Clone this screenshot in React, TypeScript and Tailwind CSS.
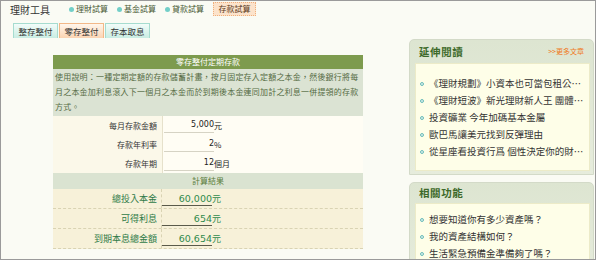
const cjk = "font-['Noto_Sans_CJK_TC','Noto_Sans',sans-serif]";
const num = "font-['DejaVu_Sans','Noto_Sans_CJK_TC',sans-serif]";

function NavItem({ label }: { label: string }) {
  return (
    <div className="flex items-center gap-[2px]">
      <span className="h-[5px] w-[5px] rounded-full bg-[#72cfc8]" />
      <span className="text-[8px] text-[#4a5c36]">{label}</span>
    </div>
  );
}

function Tab({ label, active }: { label: string; active?: boolean }) {
  return (
    <div
      className={
        active
          ? "flex h-[15px] w-[45px] items-center justify-center border border-b-0 border-[#f2b888] bg-gradient-to-b from-[#fff6ec] to-[#fbd4b2] text-[8.5px] text-[#333]"
          : "flex h-[15px] w-[45px] items-center justify-center border border-b-0 border-[#a6dccf] bg-gradient-to-b from-[#f2fcf9] to-[#c9ede3] text-[8.5px] text-[#333]"
      }
    >
      {label}
    </div>
  );
}

function InputRow({ label, value, unit }: { label: string; value: string; unit: string }) {
  return (
    <div className="flex h-[19px]">
      <div className="flex w-[109px] items-center justify-end bg-[#fbf8e9] pr-[5px] text-[8px] text-[#333]">
        {label}
      </div>
      <div className="flex flex-1 items-center border-l border-[#e6e1cb] bg-[#fffdf4] pl-[1px]">
        <span className={`${num} inline-block w-[50px] border-b border-[#d6d3c4] pb-[1px] text-right text-[8px] leading-[12px] text-[#222]`}>
          {value}
        </span>
        <span className="text-[8px] text-[#222]">{unit}</span>
      </div>
    </div>
  );
}

function ResultRow({ label, value }: { label: string; value: string }) {
  return (
    <div className="flex h-[20px] border-b border-dashed border-[#d9d3b3] bg-[#f7f1d9]">
      <div className="flex w-[109px] items-center justify-end border-r border-dashed border-[#d9d3b3] pr-[4px] text-[9px] text-[#2e7a47]">
        {label}
      </div>
      <div className="flex flex-1 items-center">
        <span className={`${num} inline-block w-[50px] border-b border-[#5a5a4a] text-right text-[9.5px] leading-[13px] text-[#2f8a4c]`}>
          {value}
        </span>
        <span className="text-[9px] text-[#2f8a4c]">元</span>
      </div>
    </div>
  );
}

function SideItem({ text }: { text: string }) {
  return (
    <li className="flex h-[17px] items-center gap-[5px] whitespace-nowrap text-[9.5px] text-[#333]">
      <span className="h-[4px] w-[4px] shrink-0 rounded-full border border-[#6cbcb8] bg-[#d8f0ee]" />
      {text}
    </li>
  );
}

function SideBox({
  title,
  more,
  items,
  headerH,
  padTop,
}: {
  title: string;
  more?: boolean;
  items: string[];
  headerH: string;
  padTop: string;
}) {
  return (
    <div className="rounded-t-[5px] border border-[#d3dac8] bg-gradient-to-b from-[#dde5d1] to-[#e6ecdc] pb-[3px] pl-[5px] pr-[3px]">
      <div className={`flex ${headerH} items-center justify-between pl-[4px] pr-[6px]`}>
        <span className="text-[10.5px] font-bold tracking-[0.6px] text-[#3d6a2a]">{title}</span>
        {more && <span className="text-[7px] text-[#f07a1c]">&gt;&gt;更多文章</span>}
      </div>
      <ul className={`border border-[#ecebc8] bg-[#fefee8] ${padTop} pb-[10px] pl-[4px]`}>
        {items.map((t) => (
          <SideItem key={t} text={t} />
        ))}
      </ul>
    </div>
  );
}

export default function App() {
  return (
    <div className={`${cjk} h-[265px] w-[596px] bg-white`}>
      <div className="flex h-[260px] w-[596px] overflow-hidden border border-[#9a9a9a] bg-[#fafbf4]">
        {/* left column */}
        <div className="w-[400px] shrink-0">
          {/* nav */}
          <div className="flex h-[16px] items-center">
            <span className="ml-[9px] text-[10px] text-[#333]">理財工具</span>
            <div className="ml-[19px] flex items-center gap-[9px]">
              <NavItem label="理財試算" />
              <NavItem label="基金試算" />
              <NavItem label="貸款試算" />
              <span className="flex h-[14px] w-[43px] items-center justify-center border border-dotted border-[#f0b07c] bg-[#fce3cb] text-[8px] text-[#5b3a1c]">
                存款試算
              </span>
            </div>
          </div>

          {/* tabs */}
          <div className="ml-[12px] mt-[6px] flex gap-[1px]">
            <Tab label="整存整付" />
            <Tab label="零存整付" active />
            <Tab label="存本取息" />
          </div>

          {/* table */}
          <div className="ml-[52px] mt-[17px] w-[310px]">
            <div className="flex h-[14px] items-center justify-center bg-[#7d9b4e] text-[8px] text-white">
              零存整付定期存款
            </div>
            <div className="h-[47px] whitespace-nowrap bg-[#dbe3d3] pl-[2px] text-[8px] leading-[15px] tracking-[0.2px] text-[#556b43]">
              使用說明：一種定期定額的存款儲蓄計畫，按月固定存入定額之本金，然後銀行將每
              <br />
              月之本金加利息滾入下一個月之本金而於到期後本金連同加計之利息一併提領的存款
              <br />
              方式。
            </div>
            <InputRow label="每月存款金額" value="5,000" unit="元" />
            <InputRow label="存款年利率" value="2" unit="%" />
            <InputRow label="存款年期" value="12" unit="個月" />
            <div className="flex h-[16px] items-center justify-center bg-[#dae3d1] text-[8px] text-[#5b7d3c]">
              計算結果
            </div>
            <ResultRow label="總投入本金" value="60,000" />
            <ResultRow label="可得利息" value="654" />
            <ResultRow label="到期本息總金額" value="60,654" />
          </div>
        </div>

        {/* sidebar */}
        <div className="ml-[8px] mt-[38px] w-[185px]">
          <SideBox
            title="延伸閱讀"
            more
            headerH="h-[23px]"
            padTop="pt-[11px]"
            items={[
              "《理財規劃》小資本也可當包租公…",
              "《理財短波》新光理財新人王 團體…",
              "投資礦業 今年加碼基本金屬",
              "歐巴馬讓美元找到反彈理由",
              "從星座看投資行爲 個性決定你的財…",
            ]}
          />
          <div className="mt-[7px]">
            <SideBox
              title="相關功能"
              headerH="h-[20px]"
              padTop="pt-[7px]"
              items={[
                "想要知道你有多少資產嗎？",
                "我的資產結構如何？",
                "生活緊急預備金準備夠了嗎？",
              ]}
            />
          </div>
        </div>
      </div>
    </div>
  );
}
